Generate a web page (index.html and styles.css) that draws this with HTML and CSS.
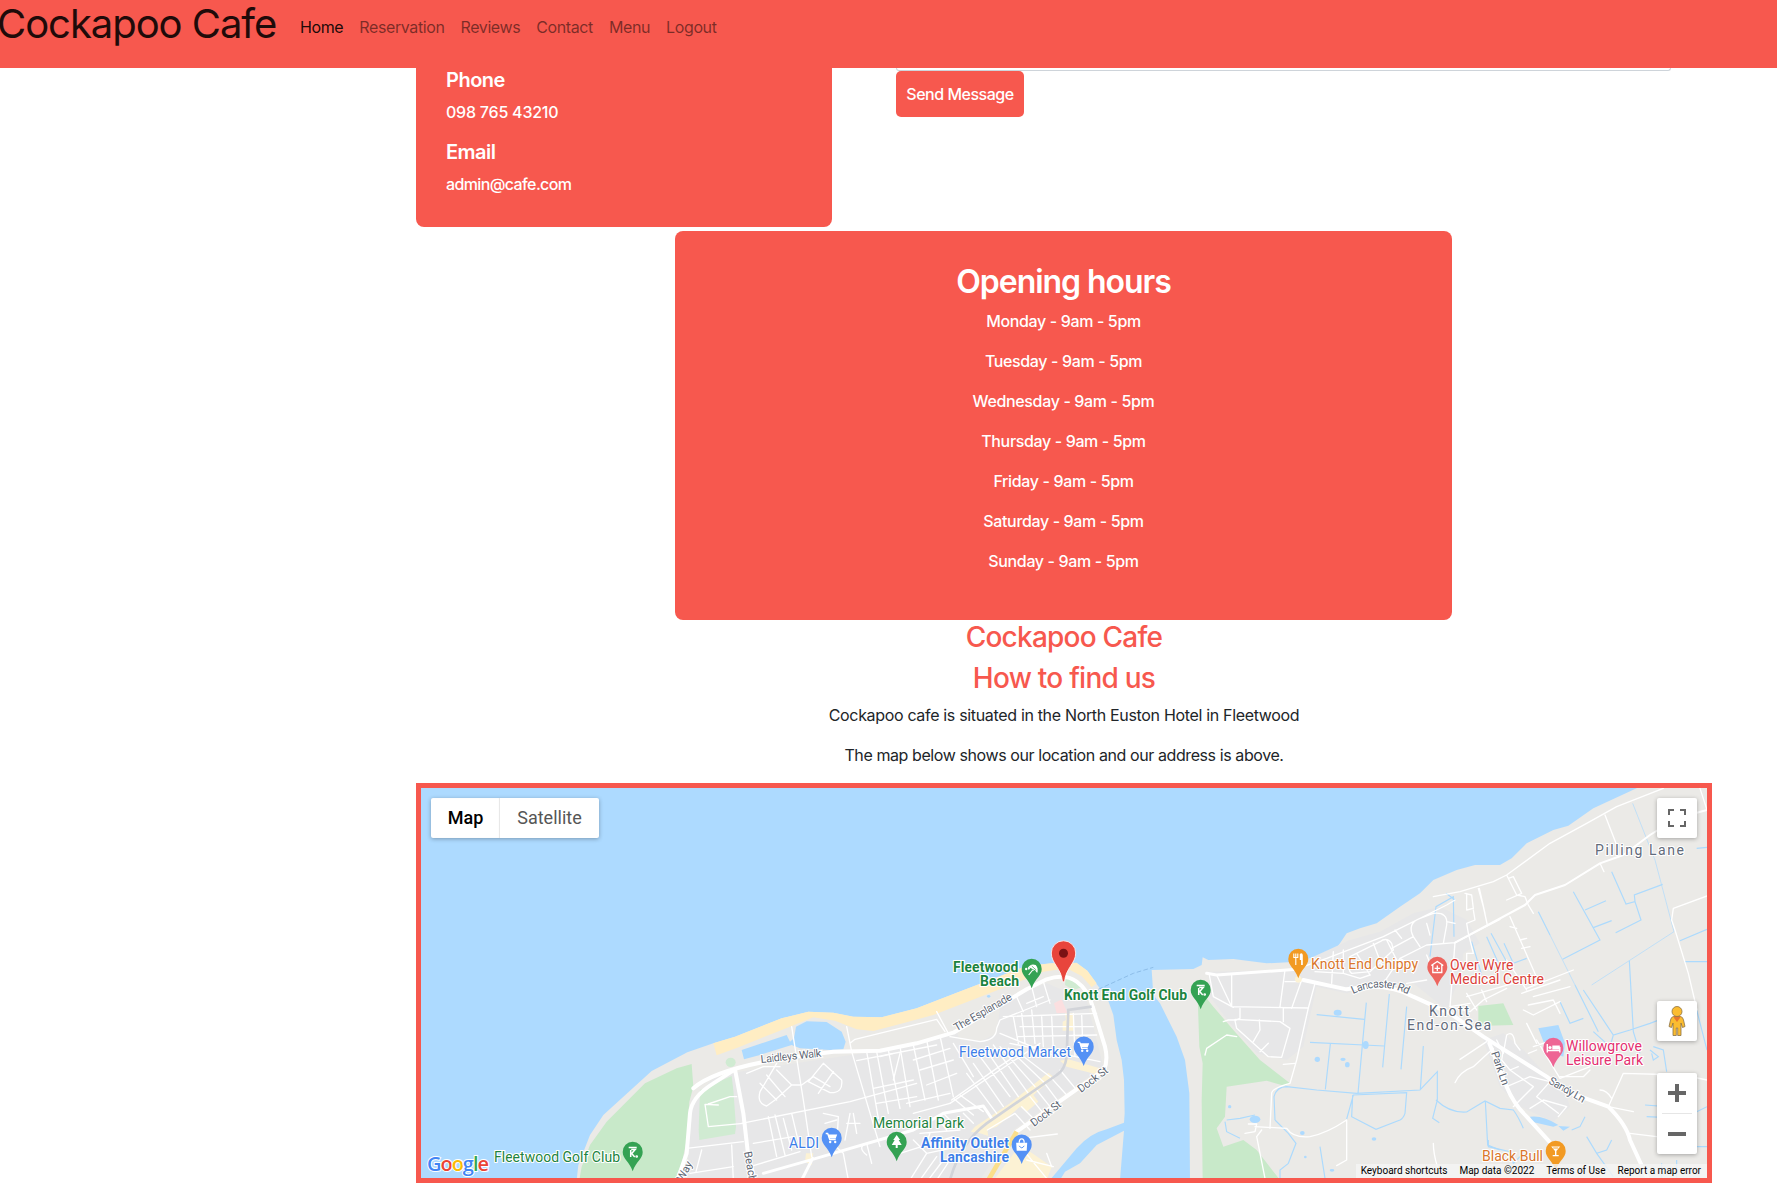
FILE: index.html
```html
<!DOCTYPE html>
<html lang="en">
<head>
<meta charset="utf-8">
<title>Cockapoo Cafe</title>
<link rel="stylesheet" href="styles.css">
</head>
<body>
<nav class="navbar">
  <a class="brand">Cockapoo Cafe</a>
  <ul class="nav-links">
    <li class="active">Home</li><li>Reservation</li><li>Reviews</li><li>Contact</li><li>Menu</li><li>Logout</li>
  </ul>
</nav>
<main class="content">
  <section class="contact-row">
    <div class="contact-card">
      <h5>Phone</h5>
      <p class="phone">098 765 43210</p>
      <h5>Email</h5>
      <p class="email">admin@cafe.com</p>
    </div>
    <div class="form">
      <div class="message-box"></div>
      <button class="send">Send Message</button>
    </div>
  </section>
  <section class="hours">
    <h2>Opening hours</h2>
    <p>Monday - 9am - 5pm</p>
    <p>Tuesday - 9am - 5pm</p>
    <p>Wednesday - 9am - 5pm</p>
    <p>Thursday - 9am - 5pm</p>
    <p>Friday - 9am - 5pm</p>
    <p>Saturday - 9am - 5pm</p>
    <p>Sunday - 9am - 5pm</p>
  </section>
  <section class="find">
    <h3>Cockapoo Cafe</h3>
    <h3>How to find us</h3>
    <p>Cockapoo cafe is situated in the North Euston Hotel in Fleetwood</p>
    <p class="hint">The map below shows our location and our address is above.</p>
  </section>
  <section class="map">
    <svg class="map-canvas" viewBox="421 788 1286 390" width="1286" height="390">
      <defs>
        <path id="pin" d="M0-10.2A10 10 0 0 0-10 0C-10 7-3.500 9 0 19.200C3.500 9 10 7 10 0A10 10 0 0 0 0-10.200Z"/>
        <g id="golfer" fill="none" stroke="#fff" stroke-width="1.500"><path d="M-4-4.500H4M-1.500-2.500L2.500-2.500L-1 1.500L2 5M-2-2L-2 5"/><circle cx="4" cy="4.500" r=".6"/></g>
        <g id="cart"><path d="M-6-4.500H-4L-2 1.500H4" fill="none" stroke="#fff" stroke-width="1.300"/><path d="M-4-3.500H5.500L4 .5H-2.500Z" fill="#fff"/><circle cx="-1.500" cy="4" r="1.200" fill="#fff"/><circle cx="3.500" cy="4" r="1.200" fill="#fff"/></g>
      </defs>
      <rect class="water" x="421" y="788" width="1286" height="390"/>

      <!-- Fleetwood peninsula -->
      <g transform="translate(900 900) scale(.33333)">
        <path class="land" d="M-970 840L-965 795L-930 705L-890 645L-745 513L-638 457L-560 430L-495 410L-355 355L-275 335L-200 338L-140 350L-55 352L50 325L170 278L270 240L380 198L455 190L530 190L562 212L592 255L622 295L640 345L650 420L665 480L672 540L674 640L672 668L620 688Q570 700 530 745L450 840Z"/>
        <path class="land" d="M480 840L495 815L540 790L590 735L672 692L660 840Z"/>
        <path class="urban" d="M-640 840L-625 600L-560 535L-480 515L-350 495L-60 452L150 400L340 290L440 250L560 300L610 500L340 690L240 840Z"/>
        <path class="land" d="M170 395L300 325L290 400L240 425L180 420Z"/>
        <path class="green" d="M-962 840L-955 800L-930 735L-880 665L-765 550L-670 505L-625 492L-620 560L-632 605L-640 720L-665 840Z"/>
        <path class="park" d="M-600 570L-505 528L-500 570L-492 680L-495 702L-602 720L-604 690Z"/>
        <ellipse class="park" cx="-508" cy="487" rx="15" ry="14"/>
        <path class="sand" d="M-560 430L-495 410L-355 355L-275 335L-200 338L-140 350L-55 352L50 325L170 278L270 240L380 198L455 190L530 188L562 212L590 250L575 262L545 228L500 205L430 215L340 252L230 295L100 345L0 372L-80 393L-130 388L-195 362L-260 352L-330 380L-480 440L-550 466Z"/>
        <path class="lake" d="M-475 450L-340 405L-330 425L-318 415L-312 380L-280 364L-220 366L-175 395L-163 425L-170 448L-210 450L-300 445L-325 435L-420 465L-468 478Z"/>
        <path class="pink" d="M462 310L485 298L502 338L470 340Z"/>
        <path class="park" d="M497 228Q530 235 545 262L520 270L495 255Z"/>
        <path class="shop" d="M495 340H520V392H488V365L498 360ZM480 482L505 478L600 505L598 525L500 500ZM212 695L225 680L330 610L445 518L462 532L400 585L415 605L380 635L360 620L290 680L262 690L265 708L240 700ZM285 835L345 755L375 745L455 800L440 840H285ZM-282 760L-260 760L-265 795L-285 785Z"/>
        <g class="street">
          <path d="M-620 565Q-560 510-350 475L-200 455L-60 452L50 430L160 398L380 268L440 238Q495 220 530 245Q565 270 578 320L615 440Q625 480 612 510L350 695" class="major"/>
          <path d="M-668 840L-640 760L-630 640Q-625 590-560 550L-495 508L-470 640L-455 770L-435 840" class="major"/>
          <path d="M-410 820L-262 778L40 690L130 640L250 618L275 655M-262 775L-295 840" class="mid"/>
          <path d="M-475 670L-150 605L50 550M-640 745L-470 725M-630 820L-500 800M-595 750L-612 815M-505 735L-500 840M-450 800L-300 755M-440 730L-320 710M-395 650L-370 770M-375 645L-345 765M-350 655L-325 750M-325 640L-300 745M-325 380L-290 600L-265 770"/>
          <path d="M-370 490L-420 575Q-430 610-400 618L-375 600L-325 555L-370 510M-420 550L-370 600M-400 525L-345 590M-230 490L-275 545L-210 578Q-170 580-175 540L-230 490M-260 530L-210 560M-245 580L-200 515M-325 555L-295 555L-260 530M-460 520L-410 500L-360 500"/>
          <path d="M-575 612L-510 590H-490M-545 615L-585 613L-575 680L-470 670M-230 640L-185 650L-190 740M-225 670L-190 660M-150 640L-165 720M-140 640L-130 700M-160 670H-120M-155 840L-170 760L-215 720M-100 765Q-130 740-100 730L-85 790"/>
          <path d="M-160 380L-145 455L-60 740M-150 430L-135 418L110 358L135 395M110 335L145 400M-100 455L-65 655M-70 455L-35 640M-35 450L0 625M0 440L30 620M40 435L75 600M80 420L115 600M120 408L160 590M-130 482L110 435M-80 565L40 540M-70 610L50 590M40 480L150 445M60 510L160 480M80 555L170 520M150 410L240 425Q290 420 290 385L300 360L450 300M160 430L220 530"/>
          <path d="M240 470L330 590M220 490L310 620M255 445L355 590M280 435L385 580M300 440L405 560M325 445L430 545M345 450L450 530M200 520L290 640M150 610L420 430M155 600L290 505L350 465M340 350L355 430M365 340L375 430M395 330L405 430M425 350L430 440M455 350L460 450M310 350L590 340M360 380L580 380M355 410L590 405M330 430L600 485M300 400L470 470M395 260L410 320M430 245L450 310M350 290L370 335M380 310L430 290M520 340L525 470M545 345L550 480"/>
          <path d="M160 595L220 645M180 585L250 635M130 640L170 680M110 650L140 690M190 640L220 670M20 610L150 580M40 640L150 610M90 700L75 740M40 720L80 760M0 760L160 710M60 700L180 690M80 730L170 725M30 840L80 760L150 745M60 840L110 770M85 840L130 780M110 840L150 780M390 590L430 640M410 570L450 620M430 545L475 605M450 530L500 585M480 510L530 570M365 620L410 665M262 690L345 640L390 690M370 750L440 835M380 780L460 800M440 760L455 800M365 715L472 702M0 460L-20 540M-60 470L-20 460"/>
        </g>
        <path class="rail" d="M150 840Q180 730 260 670L470 525Q495 510 500 470L505 330L575 320"/>
        <path class="orange" d="M265 840L350 695"/>
        <path class="ferry" d="M595 268L700 220L760 202"/>
        <ellipse class="lake" cx="266" cy="289" rx="5" ry="4"/>
      </g>

      <!-- Knott End and Pilling -->
      <g transform="translate(1200 900) scale(.33333)">
        <path class="land" d="M-145 210L-20 207L5 195L8 172L25 180L100 177L200 190L290 185L400 155L420 130L440 100L480 85L530 70L600 20L660-20L700-60L770-90L825-105L900-105L935-125L980-170L1060-210L1105-223L1180-275L1320-340H1530V840H-30L-32 580L-45 480L-70 410L-120 310L-140 285Z"/>
        <path class="urban" d="M25 215L270 210L340 170L450 120L540 95L640 40L720 20L800 60L840 130L790 160L780 230L740 330L640 250L530 255L440 280L350 260L310 440L260 480L170 460L90 370L30 290ZM850 420L910 400L970 450L1100 590L1110 620L1060 665L960 620L900 560Z"/>
        <path class="green" d="M-8 260L40 320L100 390L180 480L270 550L255 558L200 542L80 560L75 650L50 685L70 740L130 720L170 750L240 840H8L5 600L8 490L-2 440Z"/>
        <path class="green" d="M835 318L910 310L940 375L835 378Z"/>
        <path class="lake" d="M1015 385L1075 375L1095 430L1090 470L1040 450ZM990 650Q1030 645 1075 675L1060 680L995 665ZM1075 678L1110 680L1090 692Z"/>
        <g class="lake"><ellipse cx="413" cy="338" rx="12" ry="9"/><ellipse cx="497" cy="435" rx="9" ry="12"/><ellipse cx="352" cy="478" rx="8" ry="8"/><ellipse cx="442" cy="494" rx="7" ry="8"/><ellipse cx="429" cy="478" rx="8" ry="5"/><ellipse cx="165" cy="658" rx="16" ry="11"/><ellipse cx="307" cy="699" rx="7" ry="6"/><ellipse cx="522" cy="717" rx="7" ry="5"/><ellipse cx="89" cy="620" rx="5" ry="5"/><ellipse cx="316" cy="771" rx="4" ry="4"/><ellipse cx="396" cy="811" rx="7" ry="4"/></g>
        <g class="stream">
          <path d="M350 344L493 358M499 308L488 425L474 580M330 427L553 438M568 282L548 502M620 320L603 508M391 432L376 568M670 438L661 569M440 657L460 585L620 578L615 640Q610 655 600 660L528 688L455 650L458 585M225 660L222 590Q230 560 260 560L350 570L470 580L660 570L712 515V600L698 655L718 668M708 600Q750 640 800 636L855 603L900 625L940 630Q955 650 970 685M225 660L265 700L288 730L265 790L240 810V840M80 660L120 655L165 645M120 715L80 695L75 665M360 740L375 835M856 603L863 735L900 750"/>
          <path d="M690 170L708 20L760-10L762 110M738-20L765 0M815 125L845 225M860 110L900 200M873 100L920 185M912 130L940 190L980 175M1015 35L1050 105M1120-25L1200 120L1088 178M1155 30L1218 2M1180 83L1235 62M1235-85L1278 12L1305 5L1303-15L1388-47M1305 5L1323 60L1247 98M1440 122L1521 88M1455 185H1521M1490-155L1521-158"/>
          <path class="faint" d="M1298-290L1365-120L1422 95L1175 255M1050 105L1125 255"/>
          <path d="M1080 305L1110 370L1150 355M1125 255L1195 395M1150 270L1240 405L1290 390L1350 370L1430 340M1288 182L1300 395L1320 460M1240 405L1230 440L1180 395M1360 440L1390 450L1400 515M1350 450L1375 470L1360 480L1355 460M1490 330L1521 450M1335 615L1400 620M1340 650L1450 655L1521 620M1160 710L1190 760L1220 750L1235 720M1190 760L1240 830M1380 740L1521 740M1385 790V840M1430 780V840M1115 690L1140 680L1155 650M865 720V740L930 755L940 790L960 770"/>
        </g>
        <g class="street thin">
          <path class="mid" d="M20 220L50 225L290 208"/>
          <path d="M50 225L95 320L325 324M95 225V320M28 225L40 290L100 322M255 210L240 320M120 325V355L105 362L110 385L205 470L245 472L270 385L240 365L105 358M250 325V365M305 240L275 325M345 250L325 324L290 480L270 550Q215 565 215 580L210 685M205 430L180 455M160 425L180 390L178 360M70 365L85 360H105M255 245L300 245M400 155L395 250M430 150L430 220M345 215L430 220L480 235L510 225"/>
          <path d="M310 200L380 175L550 110L740 15L765 0M450 170L540 125Q560 110 575 130L580 150L510 215L455 220Q440 210 455 180ZM470 160L510 225M520 130L545 195M560 120L600 200M575 145L640 110L660 140M640 110Q620 70 660 55L700 40Q745 35 740 75L730 130M600 175L680 135L765 128L900 58M640 200L600 175L550 250M585 90L605 115M680 70L690 105M740 65L765 70M765 128L750 320L810 310M620 250L680 240M680 165L690 190M635 185L640 220"/>
          <path class="wide" d="M765 128L975 15L1005-15L1095-45L1200-110L1270-135L1350-195L1430-245L1521-270"/>
          <path d="M700-10L780-25L880-55L920-75L1050-170L1160-230L1250-280L1390-335M920-75L950-15L975-10L985 15L1000 40M925-65L940-70L965-20L920 0M1215-255L1250-165M1200-110L1212-85M930 50L1020 255M930 80L950 85M960 120L980 115M965 145L990 140M800-20L800 30L820 25L815-15L795-20M835-35L850 20L862 75M838-35L855 40M800 70L825 60L820 30M800 70L805 100L820 160L800 160V200M1521-12L1420 25L1415 60L1425 90L1465 220L1491 330M1500-335L1521-270"/>
          <path d="M750 320L810 335L850 300L920 265M800 280L830 330M800 290L940 250M845 270L860 305M920 180L980 270M980 265L1120 210M965 280L1080 240M1000 290L1110 260M985 315L1060 300L1080 340M970 330L1000 345L1080 305M1010 420L1080 535L1170 500M1000 440L1060 420M980 370L1010 430M985 460L1010 450M1060 535L1110 590"/>
          <path class="major" d="M310 240L440 268Q560 245 640 290L750 340L850 410L1040 530L1100 575L1225 620Q1280 675 1290 720L1345 840"/>
          <path class="major" d="M868 430L920 560Q940 610 980 650L1080 760"/>
          <path d="M780 478L860 425M765 548Q780 515 820 500L880 445M910 450L905 480L930 510L955 500M890 420L910 460L920 405Q940 390 945 430L960 450M930 510L1000 560L940 620M920 560L990 530L1050 545L1010 590L1075 640M990 625L1030 600L1100 620L1075 650M1225 620L1270 520L1450 525L1521 540M1225 620L1300 635M1200 570Q1220 570 1235 595M1290 700L1370 710M1080 530H1150L1170 510"/>
          <path d="M135 700L165 695L170 672L145 672M165 680L260 685Q280 715 330 710Q380 700 440 660V780L410 797M185 690L170 710L195 835M700 730Q700 760 712 800M15 465L20 445L80 405L110 410M250 493L285 490"/>
        </g>
        <circle class="shop" cx="295" cy="238" r="10"/>
      </g>

      <g class="road-label">
        <text transform="translate(761 1063) rotate(-6)" textLength="61">Laidleys Walk</text>
        <text transform="translate(956.500 1031.500) rotate(-30)" textLength="65">The Esplanade</text>
        <text transform="translate(1034 1127) rotate(-37)" textLength="35">Dock St</text>
        <text transform="translate(1081 1093) rotate(-37)" textLength="35">Dock St</text>
        <path id="lancaster" d="M1353 994Q1382 980 1411 996" fill="none" stroke="none"/>
        <text><textPath href="#lancaster" textLength="57">Lancaster Rd</textPath></text>
        <text transform="translate(1491 1053) rotate(71)" textLength="35">Park Ln</text>
        <text transform="translate(1548 1083) rotate(30)" textLength="40">Sandy Ln</text>
        <text transform="translate(744 1152) rotate(80)">Beach</text>
        <text transform="translate(683 1182) rotate(-62)">Way</text>
      </g>

      <g transform="translate(632.700 1152)"><use href="#pin" fill="#34a253"/><use href="#golfer"/></g>
      <g transform="translate(831.700 1138)"><use href="#pin" fill="#5491f5"/><use href="#cart"/></g>
      <g transform="translate(896.700 1142)"><use href="#pin" fill="#34a253"/><path fill="#fff" d="M0-7L3.500-2H2L5 3H1V6H-1V3H-5L-2-2H-3.500Z"/></g>
      <g transform="translate(1021.700 1144.800)"><use href="#pin" fill="#5491f5"/><path fill="#fff" d="M-5.500-2H5.500L5 6H-5Z"/><path fill="none" stroke="#fff" stroke-width="1.300" d="M-2.500-2Q-2.500-6 0-6T2.500-2"/><path fill="none" stroke="#5491f5" d="M-2.500 1Q0 5 2.500 1"/></g>
      <g transform="translate(1083.700 1046.800)"><use href="#pin" fill="#5491f5"/><use href="#cart"/></g>
      <g transform="translate(1031.700 969)"><use href="#pin" fill="#34a253"/><path fill="#fff" d="M-4-1Q-1-6 4-4Q7-1 5.500 4L3 1L1.500 2L-1-1L-3 1Z"/><path d="M1 1L-3 6" stroke="#fff" stroke-width="1.200"/><path d="M-2-1L4 2M0-3L4.500 1" stroke="#34a253" stroke-width=".7"/><circle cx="-5.500" cy="0" r="1.200" fill="#fff"/></g>
      <g transform="translate(1200.700 990)"><use href="#pin" fill="#34a253"/><use href="#golfer"/></g>
      <g transform="translate(1298.300 959)"><use href="#pin" fill="#f29a23"/><path fill="none" stroke="#fff" stroke-width="1.100" d="M-4.500-5.500V-1.500H-.5V-5.500M-2.500-5.500V6"/><path fill="#fff" d="M1.500-5Q4-7 4.500-4V6H2.800V1H1.500Z"/></g>
      <g transform="translate(1437.300 967)"><use href="#pin" fill="#ed655f"/><path fill="none" stroke="#fff" stroke-width="1.300" d="M-6-1.500L0-5.500L6-1.500M-4.500-2V5.500H4.500V-2M0-1.500V4M-2.700 1.300H2.700"/></g>
      <g transform="translate(1553.300 1048)"><use href="#pin" fill="#ee6594"/><path fill="none" stroke="#fff" stroke-width="1.400" d="M-6-4V4.500M-6 2.500H6.500M6.500 4.500V-1"/><path fill="#fff" d="M-1-2.500H6.500V1.500H-1Z"/><circle cx="-3.300" cy="-.5" r="1.600" fill="#fff"/></g>
      <g transform="translate(1555.700 1151)"><use href="#pin" fill="#f29a23"/><path fill="#fff" d="M-4.500-4.500H4.500L.7 0V4H3V5.300H-3V4H-.7V0Z"/><path stroke="#f29a23" stroke-width=".9" d="M-2.500-3H2.500"/></g>

      <g class="poi">
        <text class="nature" x="494" y="1162" textLength="126">Fleetwood Golf Club</text>
        <text class="nature" x="873" y="1128" textLength="91">Memorial Park</text>
        <text class="retail" x="789" y="1148" textLength="30">ALDI</text>
        <text class="retail" x="959" y="1057" textLength="112">Fleetwood Market</text>
        <text class="nature strong" x="953" y="972" textLength="65.500">Fleetwood</text>
        <text class="nature strong" x="980" y="986" textLength="39">Beach</text>
        <text class="nature strong" x="1064" y="999.500" textLength="123">Knott End Golf Club</text>
        <text class="retail strong" x="921" y="1148" textLength="88">Affinity Outlet</text>
        <text class="retail strong" x="940" y="1162" textLength="69">Lancashire</text>
        <text class="food" x="1311" y="969" textLength="107">Knott End Chippy</text>
        <text class="food" x="1482" y="1161" textLength="61">Black Bull</text>
        <text class="medical" x="1450" y="970" textLength="63.500">Over Wyre</text>
        <text class="medical" x="1450" y="984" textLength="94">Medical Centre</text>
        <text class="hotel" x="1566" y="1051" textLength="76">Willowgrove</text>
        <text class="hotel" x="1566" y="1065" textLength="77">Leisure Park</text>
        <text class="town" x="1429" y="1016" textLength="40">Knott</text>
        <text class="town" x="1407" y="1030" textLength="84">End-on-Sea</text>
        <text class="town" x="1595" y="855" textLength="89">Pilling Lane</text>
      </g>

      <path d="M1063.500 940.800A12.200 12.200 0 0 0 1051.300 953C1051.300 963.500 1061.300 968 1062.500 981.800H1064.500C1065.700 968 1075.700 963.500 1075.700 953A12.200 12.200 0 0 0 1063.500 940.800Z" fill="#e8453c" stroke="#fff" stroke-width=".8"/>
      <circle cx="1063.500" cy="953.300" r="4.500" fill="#7b1214"/>
      <text class="google" x="427" y="1170.500" textLength="62"><tspan fill="#4285f4">G</tspan><tspan fill="#ea4335">o</tspan><tspan fill="#fbbc04">o</tspan><tspan fill="#4285f4">g</tspan><tspan fill="#34a853">l</tspan><tspan fill="#ea4335">e</tspan></text>
    </svg>
    <div class="map-type"><span class="selected">Map</span><span>Satellite</span></div>
    <div class="control fullscreen"><svg width="18" height="18" viewBox="0 0 18 18"><path fill="none" stroke="#666" stroke-width="2" d="M1 6V1H6M12 1H17V6M17 12V17H12M6 17H1V12"/></svg></div>
    <div class="control pegman"><svg width="18" height="30" viewBox="0 0 18 30"><path d="M5.500 10.500H12.500Q15 11 15.500 14L17 20.500L14.500 21.500L13 17V29.500H9.700V22H8.300V29.500H5V17L3.500 21.500L1 20.500L2.500 14Q3 11 5.500 10.500Z" fill="#fbbc30" stroke="#8a7145" stroke-width=".8"/><path d="M5 10.500H13L9 16Z" fill="#e8762c"/><circle cx="9" cy="5.500" r="5" fill="#fbbc30" stroke="#8a7145" stroke-width=".8"/></svg></div>
    <div class="control zoom"><svg width="40" height="81" viewBox="0 0 40 81"><path stroke="#666" stroke-width="4" d="M11 20H29M20 11V29M11 61H29"/><path stroke="#e6e6e6" d="M5 40.500H35"/></svg></div>
    <div class="attribution"><span>Keyboard shortcuts</span><span>Map data ©2022</span><span>Terms of Use</span><span>Report a map error</span></div>
  </section>
</main>
</body>
</html>
```
FILE: styles.css
```css
* { box-sizing: border-box; }
body {
  margin: 0;
  height: 1196px;
  overflow: hidden;
  background: #fff;
  color: #212529;
  font: 400 16px/24px Inter, "Liberation Sans", sans-serif;
  letter-spacing: -.33px;
}
h2, h3, h5, p, ul { margin: 0; padding: 0; }
h2, h3, h5 { margin-bottom: 8px; }
p { margin-bottom: 16px; }

.navbar { display: flex; height: 68px; background: #f7584e; }
.brand { width: 292px; padding: 0; font-size: 40px; line-height: 48px; color: #1f0b0a; margin-left: -3px; letter-spacing: -1.05px; white-space: nowrap; }
.nav-links { display: flex; gap: 16px; padding: 15px 0 0 11px; list-style: none; color: rgba(0, 0, 0, .5); letter-spacing: -.39px; }
.nav-links .active { color: rgba(0, 0, 0, .9); }

.content { width: 1296px; margin-left: 416px; }
.contact-row { display: flex; height: 159px; }
.contact-card { width: 416px; padding: 0 30px; background: #f7584e; color: #fff; border-radius: 0 0 8px 8px; font-weight: 500; }
h5 { font-size: 20px; line-height: 24px; font-weight: 600; letter-spacing: -.5px; }
.phone { letter-spacing: -.22px; }
.email { letter-spacing: -.62px; }
.form { width: 775px; margin-left: 64px; }
.message-box { height: 3px; border: 1px solid #ced4da; border-top: 0; border-radius: 0 0 4px 4px; }
.send { display: block; width: 128px; height: 46px; padding: 0; border: 0; border-radius: 5px; background: #f7584e; color: #fff; font: inherit; font-weight: 500; letter-spacing: -.48px; }

.hours { width: 777px; height: 389px; margin: 4px 0 0 259px; padding-top: 32px; border-radius: 8px; background: #f7584e; color: #fff; text-align: center; font-weight: 500; letter-spacing: -.36px; }
h2 { font-size: 32px; line-height: 38.4px; font-weight: 600; letter-spacing: -1.05px; }
.find { padding-top: 1px; text-align: center; }
h3 { font-size: 28px; line-height: 33.4px; font-weight: 500; letter-spacing: -.76px; color: #f7584e; }
h3 + p { margin-top: -1px; }
.hint { letter-spacing: -.41px; }

.map { position: relative; height: 400px; border: 5px solid #f7584e; overflow: hidden; font-family: Roboto, sans-serif; letter-spacing: 0; }
.map-canvas { display: block; letter-spacing: 0; }
.water, .lake { fill: #addaff; }
.land { fill: #ebeae7; }
.urban { fill: #e7e7e8; }
.green { fill: #c8e9c9; }
.park { fill: #d0ebd2; }
.sand { fill: #ffedc3; }
.pink { fill: #fbdfe0; }
.shop { fill: #fcf2d4; }
.street { fill: none; stroke: #fff; stroke-width: 4; stroke-linejoin: round; stroke-linecap: round; }
.street .mid { stroke-width: 9; }
.street .wide { stroke-width: 6; }
.street .major { stroke-width: 12; }
.stream { fill: none; stroke: #acdafd; stroke-width: 3.5; }
.stream .faint { stroke-width: 2; }
.rail { fill: none; stroke: #d2d4d9; stroke-width: 8; }
.orange { fill: none; stroke: #fbdf8b; stroke-width: 14; }
.ferry { fill: none; stroke: #8dbde8; stroke-width: 3; stroke-dasharray: 14 7; }
.road-label { font-size: 11px; fill: #5d6673; stroke: #fff; stroke-width: 2px; paint-order: stroke; }
.poi { font-size: 14px; stroke: #fff; stroke-width: 2.2px; paint-order: stroke; stroke-linejoin: round; }
.nature { fill: #1c8340; }
.retail { fill: #3d7ee8; }
.food { fill: #d9762b; }
.medical { fill: #db3e38; }
.hotel { fill: #e42f70; }
.town { fill: #626b7b; }
.strong { font-weight: 700; }
.google { font: 600 20px "Open Sans", sans-serif; stroke: #fff; stroke-width: 2px; paint-order: stroke; }

.map-type { position: absolute; left: 10px; top: 10px; display: flex; height: 40px; border-radius: 2px; background: #fff; color: #565656; font-size: 18px; line-height: 40px; box-shadow: 0 1px 4px rgba(0, 0, 0, .3); }
.map-type span { width: 99px; text-align: center; }
.map-type .selected { width: 69px; color: #000; font-weight: 500; box-shadow: inset -1px 0 1px rgba(0, 0, 0, .1); }
.control { position: absolute; right: 10px; width: 40px; height: 40px; display: flex; align-items: center; justify-content: center; border-radius: 2px; background: #fff; box-shadow: 0 1px 4px rgba(0, 0, 0, .3); }
.fullscreen { top: 10px; }
.pegman { top: 213px; }
.zoom { top: 285px; height: 81px; }
.attribution { position: absolute; right: 0; bottom: 0; display: flex; height: 14px; background: rgba(245, 245, 245, .8); color: #000; font-size: 10px; line-height: 14px; gap: 12px; padding: 0 6px 0 5px; white-space: nowrap; }
```
